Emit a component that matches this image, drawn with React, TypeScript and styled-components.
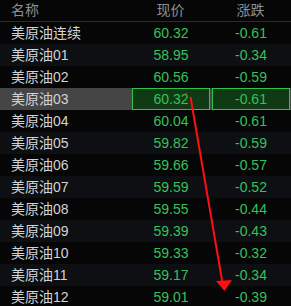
import React from "react";
import styled, { createGlobalStyle } from "styled-components";

const Global = createGlobalStyle`
  html, body { margin: 0; padding: 0; background: #060606; }
  body { overflow: hidden; }
`;

const Panel = styled.div`
  position: relative;
  width: 291px;
  height: 306px;
  overflow: hidden;
  background: #060606;
  font-family: "Liberation Sans", "Noto Sans CJK SC", sans-serif;
  font-size: 14px;
`;

const Grid = styled.div`
  display: grid;
  grid-template-columns: 131px 80px 80px;
`;

const Header = styled(Grid)`
  height: 21px;
  border-bottom: 1px solid #2b2b2b;
  color: #8b9096;
  align-items: center;
`;

const HeadCell = styled.div<{ $align: "left" | "center" }>`
  text-align: ${(p) => p.$align};
  padding-left: ${(p) => (p.$align === "left" ? "11px" : "0")};
  padding-right: ${(p) => (p.$align === "center" ? "1px" : "0")};
  line-height: 21px;
`;

const Row = styled(Grid)<{ $alt: boolean; $sel: boolean }>`
  height: 22px;
  background: ${(p) => (p.$sel ? "#454545" : p.$alt ? "#0d0f12" : "#060606")};
`;

const NameCell = styled.div`
  padding-left: 11px;
  line-height: 22px;
  color: #d3d3d3;
  white-space: nowrap;
`;

const NumCell = styled.div`
  padding-left: 1px;
  display: flex;
  align-items: flex-start;
`;

const NumBox = styled.div<{ $sel: boolean }>`
  width: 78px;
  height: ${(p) => (p.$sel ? "22px" : "22px")};
  box-sizing: border-box;
  border: 1px solid ${(p) => (p.$sel ? "#2fc24c" : "transparent")};
  background: ${(p) => (p.$sel ? "#0f3a13" : "transparent")};
  color: #34c25a;
  text-align: center;
  line-height: 20px;
`;

const Overlay = styled.svg`
  position: absolute;
  left: 0;
  top: 0;
  pointer-events: none;
`;

const rows: [string, string, string][] = [
  ["美原油连续", "60.32", "-0.61"],
  ["美原油01", "58.95", "-0.34"],
  ["美原油02", "60.56", "-0.59"],
  ["美原油03", "60.32", "-0.61"],
  ["美原油04", "60.04", "-0.61"],
  ["美原油05", "59.82", "-0.59"],
  ["美原油06", "59.66", "-0.57"],
  ["美原油07", "59.59", "-0.52"],
  ["美原油08", "59.55", "-0.44"],
  ["美原油09", "59.39", "-0.43"],
  ["美原油10", "59.33", "-0.32"],
  ["美原油11", "59.17", "-0.34"],
  ["美原油12", "59.01", "-0.39"],
];

export default function App() {
  return (
    <Panel>
      <Global />
      <Header>
        <HeadCell $align="left">名称</HeadCell>
        <HeadCell $align="center">现价</HeadCell>
        <HeadCell $align="center">涨跌</HeadCell>
      </Header>
      {rows.map(([name, price, chg], i) => {
        const sel = i === 3;
        return (
          <Row key={name} $alt={i % 2 === 1} $sel={sel}>
            <NameCell>{name}</NameCell>
            <NumCell>
              <NumBox $sel={sel}>{price}</NumBox>
            </NumCell>
            <NumCell>
              <NumBox $sel={sel}>{chg}</NumBox>
            </NumCell>
          </Row>
        );
      })}
      <Overlay width="291" height="306" viewBox="0 0 291 306">
        <rect x="185" y="93" width="2" height="1.5" fill="#ff1a1a" />
        <line x1="190.5" y1="97" x2="222.5" y2="283" stroke="#ff0f0f" strokeWidth="2" />
        <polygon points="216,281 232,280 224.5,291" fill="#ff0f0f" />
      </Overlay>
    </Panel>
  );
}
